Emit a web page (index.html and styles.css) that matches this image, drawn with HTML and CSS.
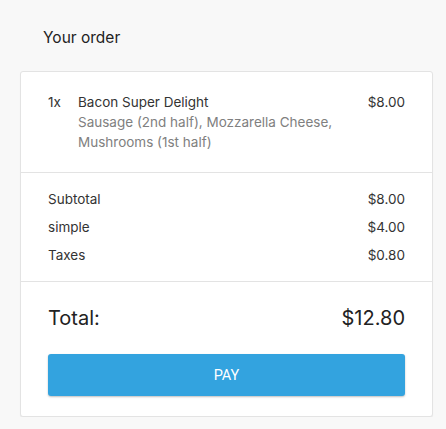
FILE: index.html
```html
<!DOCTYPE html>
<html lang="en">
<head>
    <meta charset="UTF-8">
    <meta name="viewport" content="width=device-width, initial-scale=1.0">
    <title>Your order</title>
    <link rel="stylesheet" href="styles.css">
</head>
<body>
    <h2 class="title">Your order</h2>

    <div class="card">
        <!-- 주문 항목 -->
        <div class="section items">
            <div class="item">
                <span class="qty">1x</span>
                <div class="item-info">
                    <div class="item-name">Bacon Super Delight</div>
                    <div class="item-options">Sausage (2nd half), Mozzarella Cheese, Mushrooms (1st half)</div>
                </div>
                <span class="price">$8.00</span>
            </div>
        </div>

        <!-- 합계 -->
        <div class="section summary">
            <div class="row"><span>Subtotal</span><span>$8.00</span></div>
            <div class="row"><span>simple</span><span>$4.00</span></div>
            <div class="row"><span>Taxes</span><span>$0.80</span></div>
        </div>

        <div class="section checkout">
            <div class="total"><span>Total:</span><span>$12.80</span></div>
            <button class="pay">Pay</button>
        </div>
    </div>
</body>
</html>
```

FILE: styles.css
```css
body {
    margin: 0;
    background-color: #f8f8f8;
    font-family: Inter, "Liberation Sans", sans-serif;
    color: #333;
}
.title {
    margin: 26px 0 21px 43px;
    font-size: 15.5px;
    font-weight: 400;
    line-height: 24px;
    color: #222;
}
.card {
    margin: 0 13px 0 20px;
    background: white;
    border: 1px solid #e3e3e3;
    border-radius: 3px;
    box-shadow: 0 1px 1px rgba(0, 0, 0, 0.06);
}
.section {
    padding: 0 27px;
    border-bottom: 1px solid #e3e3e3;
}
.section:last-child {
    border-bottom: none;
}
.items {
    padding-top: 20px;
    padding-bottom: 20px;
}
.item {
    display: flex;
    font-size: 13.5px;
    line-height: 20px;
}
.qty {
    width: 30px;
    flex-shrink: 0;
}
.item-info {
    flex: 1;
}
.item-options {
    color: #808080;
    max-width: 265px;
}
.summary {
    padding-top: 12px;
    padding-bottom: 12px;
}
.row {
    display: flex;
    justify-content: space-between;
    font-size: 13.5px;
    line-height: 28px;
}
.checkout {
    padding-top: 22px;
    padding-bottom: 20px;
}
.total {
    display: flex;
    justify-content: space-between;
    font-size: 20px;
    line-height: 28px;
    color: #222;
}
.pay {
    display: block;
    width: 100%;
    height: 42px;
    margin-top: 22px;
    background-color: #33a3df;
    color: white;
    border: none;
    border-radius: 3px;
    font-family: Roboto, sans-serif;
    font-size: 14.5px;
    text-transform: uppercase;
    box-shadow: 0 1px 2px rgba(0, 0, 0, 0.25);
    cursor: pointer;
}
```
